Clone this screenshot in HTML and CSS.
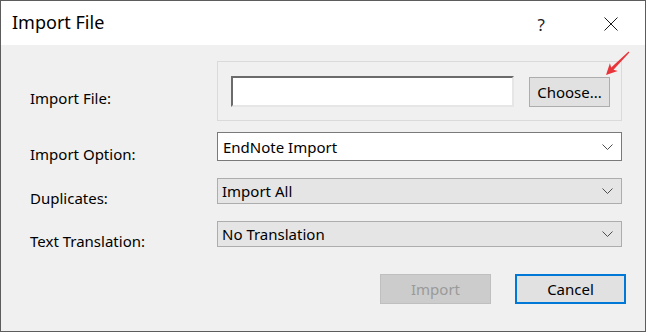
FILE: index.html
```html
<!DOCTYPE html>
<html lang="en">
<head>
    <meta charset="UTF-8">
    <title>Import File</title>
    <link rel="stylesheet" href="styles.css">
</head>
<body>

    <div class="dialog">
        <header class="titlebar">
            <span class="title">Import File</span>
            <span class="help">?</span>
            <button type="button" class="close" aria-label="Close">
                <svg viewBox="0 0 14 14" width="14" height="14"><path d="M0.5 0.5 L13.5 13.5 M13.5 0.5 L0.5 13.5" stroke="#1a1a1a" stroke-width="1" fill="none"/></svg>
            </button>
        </header>

        <main class="content">
            <div class="row row-file">
                <label class="label">Import File:</label>
                <div class="file-group">
                    <div class="file-input"></div>
                    <button type="button" class="btn choose">Choose...</button>
                </div>
            </div>

            <div class="row row-option">
                <label class="label">Import Option:</label>
                <div class="select select-edit">
                    <span>EndNote Import</span>
                    <svg class="chevron" viewBox="0 0 11 6" width="11" height="6"><polyline points="0.5,0.5 5.5,5.5 10.5,0.5" stroke="#4d4d4d" stroke-width="1" fill="none"/></svg>
                </div>
            </div>

            <div class="row">
                <label class="label">Duplicates:</label>
                <div class="select">
                    <span>Import All</span>
                    <svg class="chevron" viewBox="0 0 11 6" width="11" height="6"><polyline points="0.5,0.5 5.5,5.5 10.5,0.5" stroke="#4d4d4d" stroke-width="1" fill="none"/></svg>
                </div>
            </div>

            <div class="row">
                <label class="label">Text Translation:</label>
                <div class="select">
                    <span>No Translation</span>
                    <svg class="chevron" viewBox="0 0 11 6" width="11" height="6"><polyline points="0.5,0.5 5.5,5.5 10.5,0.5" stroke="#4d4d4d" stroke-width="1" fill="none"/></svg>
                </div>
            </div>

            <div class="actions">
                <button type="button" class="btn action" disabled>Import</button>
                <button type="button" class="btn action default">Cancel</button>
            </div>
        </main>

        <!-- red annotation arrow pointing at Choose... -->
        <svg class="pointer" viewBox="0 0 26 26" width="26" height="26"><path d="M1 24 L4.9 12.3 L6.2 16.5 L23.6 0.6 L24.4 1.4 L8.5 18.8 L12.7 20.1 Z" fill="#e8353b"/></svg>
    </div>

</body>
</html>
```

FILE: styles.css
```css
/* Reset & font */
html, body {
    margin: 0;
    padding: 0;
    background: #ffffff;
}

body {
    font-family: "Noto Sans", "Segoe UI", Arial, sans-serif;
    font-size: 15px;
    color: #000;
}

/* Dialog frame */
.dialog {
    position: relative;
    width: 646px;
    height: 332px;
    box-sizing: border-box;
    border: 1px solid #5c5c5c;
    background: #f0f0f0;
    display: flex;
    flex-direction: column;
}

/* Title bar */
.titlebar {
    height: 44px;
    flex-shrink: 0;
    background: #ffffff;
    display: flex;
    align-items: center;
    padding: 0 27px 0 11px;
}

.title {
    flex-grow: 1;
    font-size: 18px;
    margin-top: -2px;
}

.help {
    font-size: 17px;
    color: #222;
    margin-right: 59px;
    margin-top: 2px;
}

.close {
    background: none;
    border: none;
    padding: 0;
    width: 14px;
    height: 14px;
    display: flex;
    margin-top: 2px;
}

/* Form area */
.content {
    padding: 16px 23px 0 29px;
    display: flex;
    flex-direction: column;
}

.row {
    display: flex;
    align-items: center;
}

.row + .row {
    margin-top: 17px;
}

.row.row-option {
    margin-top: 11px;
}

/* labels sit a little below the middle of their control */
.label {
    width: 187px;
    flex-shrink: 0;
    margin-top: 7px;
    margin-bottom: -7px;
}

/* File chooser group */
.file-group {
    flex-grow: 1;
    height: 60px;
    box-sizing: border-box;
    border: 1px solid #dadada;
    padding: 0 11px 0 13px;
    display: flex;
    align-items: center;
    gap: 15px;
}

.file-input {
    width: 283px;
    height: 31px;
    box-sizing: border-box;
    background: #fff;
    border: 2px solid;
    border-color: #6b6b6b #e6e6e6 #e6e6e6 #6b6b6b;
    margin-top: 1px;
}

.btn {
    font-family: inherit;
    font-size: 15px;
    color: #000;
    background: #e1e1e1;
    border: 1px solid #adadad;
    padding: 0;
    box-sizing: border-box;
}

.choose {
    width: 81px;
    height: 30px;
    margin-top: 1px;
}

/* Dropdowns */
.select {
    flex-grow: 1;
    height: 26px;
    box-sizing: border-box;
    background: #e5e5e5;
    border: 1px solid #adadad;
    display: flex;
    align-items: center;
    justify-content: space-between;
    padding: 0 8px 0 4px;
}

.select.select-edit {
    height: 29px;
    background: #fff;
    border-color: #7a7a7a;
    padding-left: 5px;
}

.chevron {
    flex-shrink: 0;
}

/* Bottom buttons */
.actions {
    display: flex;
    justify-content: flex-end;
    gap: 24px;
    margin-top: 27px;
    margin-right: -4px;
}

.action {
    width: 111px;
    height: 30px;
}

.action:disabled {
    background: #cccccc;
    border-color: #bfbfbf;
    color: #9a9a9a;
}

.action.default {
    border: 2px solid #0078d7;
}

/* Annotation arrow overlay */
.pointer {
    position: absolute;
    left: 604px;
    top: 50px;
}
```
